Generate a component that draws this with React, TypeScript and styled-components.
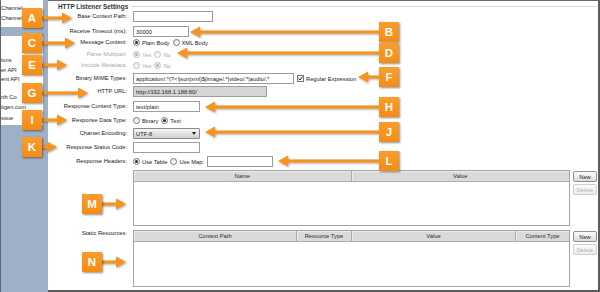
import React from "react";
import styled, { createGlobalStyle } from "styled-components";

const GlobalStyle = createGlobalStyle`
  html, body { margin: 0; padding: 0; background: #fff; }
  body {
    width: 600px; height: 292px; overflow: hidden;
    font-family: "Liberation Sans", Arial, sans-serif;
  }
  * { box-sizing: border-box; }
`;

const Page = styled.div`
  position: relative;
  display: flex;
  width: 600px;
  height: 292px;
  overflow: hidden;
  font-size: 5.75px;
  color: #222;
`;

/* ---------- sidebar ---------- */
const Sidebar = styled.aside`
  flex: none;
  width: 48px;
  background: #9eafc6;
  border-left: 1px solid #5b6476;
  padding-right: 5px;
  display: flex;
  flex-direction: column;
  gap: 9px;
`;

const TaskPane = styled.div<{ $h: number; $pad: number }>`
  height: ${(p) => p.$h}px;
  padding-top: ${(p) => p.$pad}px;
  background: #fff;
  overflow: hidden;
  display: flex;
  flex-direction: column;
`;

const TaskLink = styled.div<{ $lh: number; $mt?: number }>`
  line-height: ${(p) => p.$lh}px;
  margin-top: ${(p) => p.$mt ?? 0}px;
  white-space: nowrap;
  color: #1e1e1e;
`;

/* ---------- main panel ---------- */
const Main = styled.main`
  flex: 1;
  display: flex;
  flex-direction: column;
  background: #fff;
  border-top: 1px solid #6b6b6b;
  border-right: 2px solid #5c5c5c;
  border-bottom: 2px solid #5c5c5c;
  padding-right: 1px;
`;

const GroupHeader = styled.div`
  display: flex;
  align-items: center;
  gap: 3px;
  height: 8px;
  margin-top: 1px;
  padding-left: 10px;
  font-size: 6.4px;
  font-weight: bold;
  color: #333;
  white-space: nowrap;
  &::after {
    content: "";
    flex: 1;
    height: 1px;
    background: #d9d9d9;
  }
`;

const Row = styled.div<{ $mt: number }>`
  display: grid;
  grid-template-columns: 79px 1fr;
  column-gap: 6px;
  align-items: center;
  height: 11px;
  margin-top: ${(p) => p.$mt}px;
`;

const Label = styled.span<{ $disabled?: boolean }>`
  text-align: right;
  white-space: nowrap;
  line-height: 7px;
  color: ${(p) => (p.$disabled ? "#a8a8a8" : "#222")};
`;

const Controls = styled.div`
  display: flex;
  align-items: center;
  gap: 3px;
  height: 100%;
`;

const TextInput = styled.input<{ $w: number; $gray?: boolean }>`
  width: ${(p) => p.$w}px;
  height: 11px;
  margin: 0;
  padding: 0 2px;
  border: 1px solid #9c9c9c;
  border-radius: 0;
  background: ${(p) => (p.$gray ? "#d5d5d5" : "#fff")};
  font-family: inherit;
  font-size: 5.75px;
  color: #222;
  outline: none;
`;

const OptionLabel = styled.label<{ $disabled?: boolean }>`
  display: inline-flex;
  align-items: center;
  gap: 2px;
  white-space: nowrap;
  color: ${(p) => (p.$disabled ? "#a8a8a8" : "#222")};
`;

const RadioDot = styled.span<{ $checked?: boolean; $disabled?: boolean }>`
  flex: none;
  width: 7px;
  height: 7px;
  border-radius: 50%;
  border: 1px solid ${(p) => (p.$disabled ? "#c0c0c0" : "#767676")};
  background: linear-gradient(#e9e9e9, #ffffff);
  display: inline-flex;
  align-items: center;
  justify-content: center;
  &::after {
    content: "";
    display: ${(p) => (p.$checked ? "block" : "none")};
    width: 3px;
    height: 3px;
    border-radius: 50%;
    background: ${(p) => (p.$disabled ? "#b0b0b0" : "#2a2a2a")};
  }
`;

const CheckBox = styled.span`
  flex: none;
  width: 7px;
  height: 7px;
  border: 1px solid #767676;
  background: linear-gradient(#e9e9e9, #ffffff);
  display: inline-flex;
  align-items: center;
  justify-content: center;
`;

const SelectBox = styled.div<{ $w: number }>`
  width: ${(p) => p.$w}px;
  height: 11px;
  border: 1px solid #8a8a8a;
  border-radius: 1px;
  background: linear-gradient(#f6f6f6, #cfcfcf);
  display: flex;
  align-items: center;
  justify-content: space-between;
  padding: 0 3px 0 2px;
  &::after {
    content: "";
    border-left: 2.5px solid transparent;
    border-right: 2.5px solid transparent;
    border-top: 3px solid #1e1e1e;
  }
`;

/* ---------- tables ---------- */
const TableRow = styled.div<{ $mt: number }>`
  display: grid;
  grid-template-columns: 79px 1fr;
  column-gap: 6px;
  align-items: start;
  margin-top: ${(p) => p.$mt}px;
`;

const TableArea = styled.div`
  display: flex;
  gap: 3px;
`;

const Table = styled.div<{ $h: number }>`
  flex: 1;
  height: ${(p) => p.$h}px;
  border: 1px solid #a5a5a5;
  background: #fff;
`;

const HeaderRow = styled.div<{ $cols: string }>`
  display: grid;
  grid-template-columns: ${(p) => p.$cols};
  height: 11px;
  background: #dadada;
  border-bottom: 1px solid #adadad;
`;

const HeaderCell = styled.div`
  display: flex;
  align-items: center;
  justify-content: center;
  white-space: nowrap;
  color: #2a2a2a;
  border-right: 1px solid #a9a9a9;
  box-shadow: inset 1px 1px 0 #ececec;
  &:last-child { border-right: none; }
`;

const ButtonColumn = styled.div`
  flex: none;
  width: 24px;
  display: flex;
  flex-direction: column;
  gap: 2px;
  padding-top: 1px;
`;

const Button = styled.button`
  height: 11px;
  margin: 0;
  padding: 0;
  font-family: inherit;
  font-size: 5.75px;
  color: #222;
  border: 1px solid #8f8f8f;
  border-radius: 2px;
  background: linear-gradient(#fcfcfc, #dcdcdc);
  &:disabled {
    color: #b5b5b5;
    border-color: #cfcfcf;
    background: linear-gradient(#fbfbfb, #ededed);
  }
`;

/* ---------- annotations ---------- */
const Overlay = styled.div`
  position: absolute;
  inset: 0;
  pointer-events: none;
`;

const ArrowSvg = styled.svg<{ $x: number; $y: number }>`
  position: absolute;
  left: ${(p) => p.$x}px;
  top: ${(p) => p.$y}px;
  overflow: visible;
  filter: drop-shadow(1px 1px 0.8px rgba(0, 0, 0, 0.35));
`;

const Badge = styled.div<{ $x: number; $y: number }>`
  position: absolute;
  left: ${(p) => p.$x}px;
  top: ${(p) => p.$y}px;
  width: 20px;
  height: 20px;
  background: linear-gradient(#f99d2b, #f48c16);
  box-shadow: 1px 1px 2px rgba(0, 0, 0, 0.45);
  color: #fff;
  font-family: "Liberation Sans", Arial, sans-serif;
  font-weight: bold;
  font-size: 11.5px;
  line-height: 20px;
  text-align: center;
`;

type Ann = { letter: string; x: number; y: number; tip: number };

const ANNOTATIONS: Ann[] = [
  { letter: "A", x: 22, y: 8, tip: 72 },
  { letter: "C", x: 22, y: 33, tip: 75 },
  { letter: "E", x: 22, y: 55, tip: 67 },
  { letter: "G", x: 22, y: 83, tip: 88 },
  { letter: "I", x: 22, y: 110, tip: 67 },
  { letter: "K", x: 22, y: 137, tip: 57 },
  { letter: "M", x: 82, y: 194, tip: 126 },
  { letter: "N", x: 82, y: 252, tip: 126 },
  { letter: "B", x: 379, y: 22, tip: 190 },
  { letter: "D", x: 379, y: 43, tip: 177 },
  { letter: "F", x: 379, y: 67, tip: 358 },
  { letter: "H", x: 379, y: 97, tip: 205 },
  { letter: "J", x: 379, y: 122, tip: 205 },
  { letter: "L", x: 379, y: 151, tip: 278 },
];

function Annotation({ letter, x, y, tip }: Ann) {
  const cy = y + 10;
  const start = x + 10;
  const toRight = tip > start;
  const len = Math.abs(tip - start);
  const head = 10;
  const d = toRight
    ? `M0 4.5 H${len - head} V0.5 L${len} 6 L${len - head} 11.5 V7.5 H0 Z`
    : `M${len} 4.5 H${head} V0.5 L0 6 L${head} 11.5 V7.5 H${len} Z`;
  return (
    <>
      <ArrowSvg
        $x={Math.min(start, tip)}
        $y={cy - 6}
        width={len}
        height={12}
        viewBox={`0 0 ${len} 12`}
      >
        <path d={d} fill="#f7931e" />
      </ArrowSvg>
      <Badge $x={x} $y={y}>
        {letter}
      </Badge>
    </>
  );
}

/* ---------- small composites ---------- */
function Radio({ label, checked, disabled }: { label: string; checked?: boolean; disabled?: boolean }) {
  return (
    <OptionLabel $disabled={disabled}>
      <RadioDot $checked={checked} $disabled={disabled} />
      {label}
    </OptionLabel>
  );
}

function Check({ label }: { label: string }) {
  return (
    <OptionLabel>
      <CheckBox>
        <svg width="5" height="5" viewBox="0 0 5 5">
          <path d="M0.6 2.6 L2 4 L4.4 0.8" stroke="#222" strokeWidth="1" fill="none" />
        </svg>
      </CheckBox>
      {label}
    </OptionLabel>
  );
}

export default function App() {
  return (
    <Page>
      <GlobalStyle />
      <Sidebar>
        <TaskPane $h={27} $pad={3}>
          <TaskLink $lh={10}>Channel</TaskLink>
          <TaskLink $lh={10}>Channel</TaskLink>
        </TaskPane>
        <TaskPane $h={89} $pad={20}>
          <TaskLink $lh={9.5}>ions</TaskLink>
          <TaskLink $lh={9.5}>er API</TaskLink>
          <TaskLink $lh={9.5}>ent API</TaskLink>
          <TaskLink $lh={10.5} $mt={7}>rth Co</TaskLink>
          <TaskLink $lh={10.5}>itgen.com</TaskLink>
          <TaskLink $lh={10.5}>ssue</TaskLink>
        </TaskPane>
      </Sidebar>

      <Main>
        <GroupHeader>HTTP Listener Settings</GroupHeader>

        <Row $mt={1}>
          <Label>Base Context Path:</Label>
          <Controls><TextInput $w={80} defaultValue="" /></Controls>
        </Row>
        <Row $mt={4}>
          <Label>Receive Timeout (ms):</Label>
          <Controls><TextInput $w={56} defaultValue="30000" /></Controls>
        </Row>
        <Row $mt={0}>
          <Label>Message Content:</Label>
          <Controls>
            <Radio label="Plain Body" checked />
            <Radio label="XML Body" />
          </Controls>
        </Row>
        <Row $mt={1}>
          <Label $disabled>Parse Multipart:</Label>
          <Controls>
            <Radio label="Yes" checked disabled />
            <Radio label="No" disabled />
          </Controls>
        </Row>
        <Row $mt={0}>
          <Label $disabled>Include Metadata:</Label>
          <Controls>
            <Radio label="Yes" disabled />
            <Radio label="No" checked disabled />
          </Controls>
        </Row>
        <Row $mt={2}>
          <Label>Binary MIME Types:</Label>
          <Controls>
            <TextInput $w={161} defaultValue="application/.*(?<!json|xml)$|image/.*|video/.*|audio/.*" />
            <Check label="Regular Expression" />
          </Controls>
        </Row>
        <Row $mt={2}>
          <Label>HTTP URL:</Label>
          <Controls><TextInput $w={134} $gray readOnly defaultValue="http://192.168.1.188:80/" /></Controls>
        </Row>
        <Row $mt={4}>
          <Label>Response Content Type:</Label>
          <Controls><TextInput $w={67} defaultValue="text/plain" /></Controls>
        </Row>
        <Row $mt={3}>
          <Label>Response Data Type:</Label>
          <Controls>
            <Radio label="Binary" />
            <Radio label="Text" checked />
          </Controls>
        </Row>
        <Row $mt={2}>
          <Label>Charset Encoding:</Label>
          <Controls><SelectBox $w={67}>UTF-8</SelectBox></Controls>
        </Row>
        <Row $mt={3}>
          <Label>Response Status Code:</Label>
          <Controls><TextInput $w={67} defaultValue="" /></Controls>
        </Row>
        <Row $mt={3}>
          <Label>Response Headers:</Label>
          <Controls>
            <Radio label="Use Table" checked />
            <Radio label="Use Map:" />
            <TextInput $w={66} defaultValue="" />
          </Controls>
        </Row>

        <TableRow $mt={3}>
          <span />
          <TableArea>
            <Table $h={56}>
              <HeaderRow $cols="1fr 1fr">
                <HeaderCell>Name</HeaderCell>
                <HeaderCell>Value</HeaderCell>
              </HeaderRow>
            </Table>
            <ButtonColumn>
              <Button>New</Button>
              <Button disabled>Delete</Button>
            </ButtonColumn>
          </TableArea>
        </TableRow>

        <TableRow $mt={4}>
          <Label>Static Resources:</Label>
          <TableArea>
            <Table $h={57}>
              <HeaderRow $cols="163px 55px 164px 1fr">
                <HeaderCell>Context Path</HeaderCell>
                <HeaderCell>Resource Type</HeaderCell>
                <HeaderCell>Value</HeaderCell>
                <HeaderCell>Content Type</HeaderCell>
              </HeaderRow>
            </Table>
            <ButtonColumn>
              <Button>New</Button>
              <Button disabled>Delete</Button>
            </ButtonColumn>
          </TableArea>
        </TableRow>
      </Main>

      <Overlay>
        {ANNOTATIONS.map((a) => (
          <Annotation key={a.letter} {...a} />
        ))}
      </Overlay>
    </Page>
  );
}
